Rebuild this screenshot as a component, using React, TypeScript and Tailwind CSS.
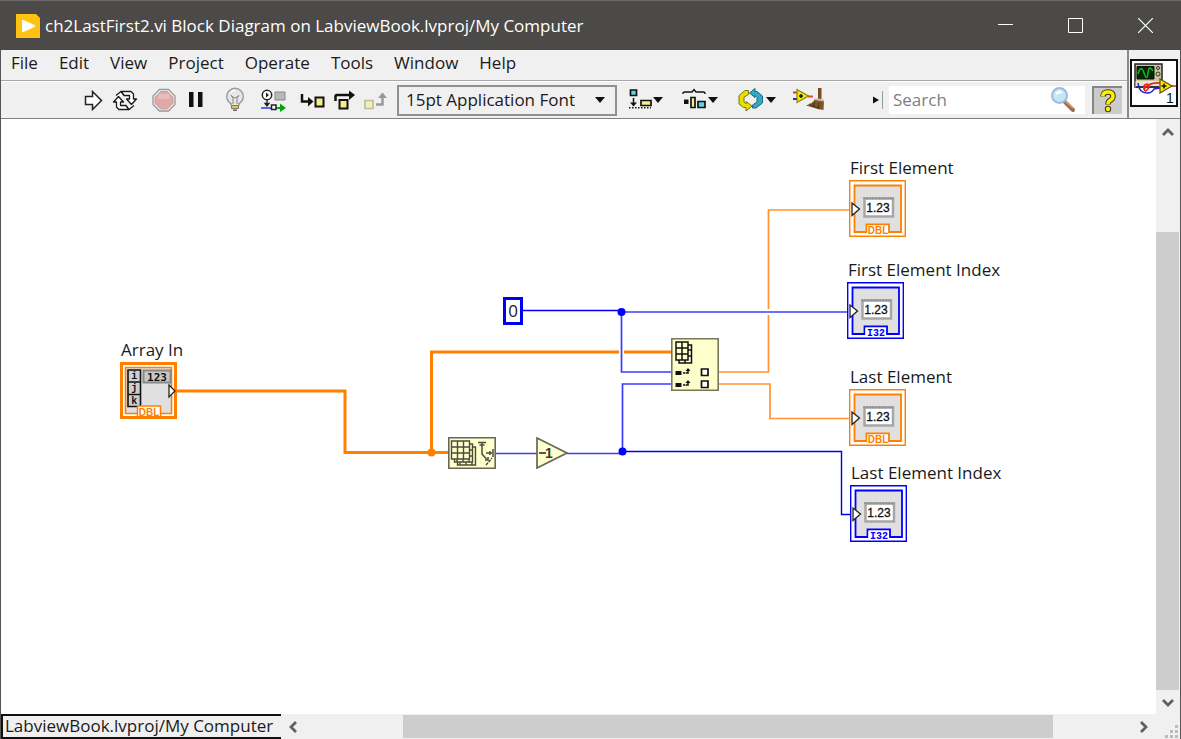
import React from "react";

const ORANGE = "#ff8000";
const THIN_ORANGE = "#ff9430";
const BLUE = "#0000f0";
const THIN_BLUE = "#3c3cff";

type IconProps = { w: number; children: React.ReactNode };

function Glyph({ w, children }: IconProps) {
  return (
    <svg width={w} height={28} viewBox={`0 0 ${w} 28`} aria-hidden="true">
      {children}
    </svg>
  );
}

function ToolButton({
  label,
  w,
  className = "",
  children,
}: IconProps & { label: string; className?: string }) {
  return (
    <button type="button" aria-label={label} className={`shrink-0 ${className}`}>
      <Glyph w={w}>{children}</Glyph>
    </button>
  );
}

function TitleBar() {
  return (
    <header className="flex h-[50px] shrink-0 items-center border-t border-[#6a6967] bg-[#4b4a48] pl-4 text-white">
      <svg width="24" height="24" viewBox="0 0 24 24" aria-hidden="true">
        <path d="M0 0H20L24 4V24H0Z" fill="#ffc20e" />
        <path d="M6 7Q6 5.500 7.500 6L18.500 11Q20 12 18.500 13L7.500 18Q6 18.500 6 17Z" fill="#fff" />
      </svg>
      <h1 className="ml-[5px] whitespace-nowrap text-[17px] leading-6">
        ch2LastFirst2.vi Block Diagram on LabviewBook.lvproj/My Computer
      </h1>
      <div className="ml-auto flex h-full">
        <button type="button" aria-label="Minimize" className="flex w-[70px] items-center justify-center">
          <svg width="15" height="15" viewBox="0 0 15 15"><path d="M0 6.500H15" stroke="#fff" /></svg>
        </button>
        <button type="button" aria-label="Maximize" className="flex w-[70px] items-center justify-center">
          <svg width="15" height="15" viewBox="0 0 15 15"><path d="M.5.5H14.500V14.500H.5Z" stroke="#fff" fill="none" /></svg>
        </button>
        <button type="button" aria-label="Close" className="flex w-[71px] items-center justify-center">
          <svg width="15" height="15" viewBox="0 0 15 15"><path d="M0 0L15 15M15 0L0 15" stroke="#fff" strokeWidth="1.200" /></svg>
        </button>
      </div>
    </header>
  );
}

const MENUS = ["File", "Edit", "View", "Project", "Operate", "Tools", "Window", "Help"];

function MenuBar() {
  return (
    <nav className="flex h-[31px] items-center gap-[21px] border-b border-[#a8a8a8] pb-1 pl-[10px] text-[17px] leading-6">
      {MENUS.map((m) => (
        <button key={m} type="button">{m}</button>
      ))}
    </nav>
  );
}

function Toolbar() {
  return (
    <div className="flex h-[37px] items-center border-t border-white pl-[83px] pr-[5px]">
      <ToolButton label="Run" w={20}>
        <path d="M1.500 10.500H8.500V5.500L17.500 14.500L8.500 23.500V18.500H1.500Z" fill="#fff" stroke="#222" strokeWidth="1.500" />
      </ToolButton>
      <ToolButton label="Run Continuously" w={26} className="ml-2">
        <g fill="#fff" stroke="#1a1a1a" strokeWidth="1.300" strokeLinejoin="round">
          <path d="M9 5.500H19L21.500 8V13H24.500L19.500 18.500L14.500 13H17.500V9.500H12Z" />
          <path d="M17 23.500H7L4.500 21V16H1.500L6.500 10.500L11.500 16H8.500V19.500H14Z" />
          <path d="M4 9.500L9 5.500L12 9.500" />
          <path d="M22 19.500L17 23.500L14 19.500" />
        </g>
      </ToolButton>
      <ToolButton label="Abort Execution" w={24} className="ml-[14px]">
        <path d="M7.500 3.500H16.500L23 10V18.500L16.500 25H7.500L1 18.500V10Z" fill="#f4f4f4" stroke="#999" strokeWidth="1.300" />
        <path d="M8.500 5.500H15.500L21 11V17.500L15.500 23H8.500L3 17.500V11Z" fill="#dfa9a9" stroke="#c9a0a0" />
        <path d="M6 8H18V13H6Z" fill="#e8bcbc" />
      </ToolButton>
      <ToolButton label="Pause" w={16} className="ml-3">
        <path d="M1 6H5.500V21H1ZM10 6H14.500V21H10Z" fill="#111" />
      </ToolButton>
      <ToolButton label="Highlight Execution" w={22} className="ml-5">
        <circle cx="11" cy="10.500" r="8.300" fill="#e6e6e6" stroke="#999" strokeWidth="1.400" />
        <path d="M7.500 17V20H14.500V17L16 15H6Z" fill="#e6e6e6" />
        <path d="M7 17V20M15 17V20M7 9L9 12V18M15 9L13 12V18M7 10L11 12L15 10" fill="none" stroke="#888" />
        <path d="M7.500 19.500H14.500V22.500H7.500Z" fill="#e8c84a" stroke="#777" />
        <path d="M9 23.500H13V25H9Z" fill="#666" />
        <path d="M6.500 7Q8 4.500 11 4.500" stroke="#fff" strokeWidth="1.500" fill="none" />
      </ToolButton>
      <ToolButton label="Retain Wire Values" w={28} className="ml-[14px]">
        <path d="M15 6H25V14H15Z" fill="#b8b8b8" stroke="#888" />
        <circle cx="7" cy="9" r="4.700" fill="#fff" stroke="#222" strokeWidth="1.500" />
        <path d="M6 6.500L9 9L6 11.500Z" fill="#222" />
        <path d="M7 14V18M5 17.500H9L7 20Z" stroke="#222" strokeWidth="1.300" fill="#222" />
        <path d="M1 22H18" stroke="#1515e0" strokeWidth="1.300" />
        <path d="M11.500 19H16V23.500H11.500Z" fill="#fff" stroke="#222" strokeWidth="1.500" />
        <path d="M18 21H20V17.500L26 22L20 26V23H18Z" fill="#00a800" />
      </ToolButton>
      <ToolButton label="Step Into" w={26} className="ml-3">
        <path d="M2 8V15.500H9" fill="none" stroke="#111" strokeWidth="2.500" />
        <path d="M8 11L13.500 15.500L8 20.500Z" fill="#111" />
        <path d="M15.500 11.500H23.500V20.500H15.500Z" fill="#f3f08a" stroke="#111" strokeWidth="2" />
      </ToolButton>
      <ToolButton label="Step Over" w={22} className="ml-2">
        <path d="M1.500 15V10.500Q1.500 9 3 9H16" fill="none" stroke="#111" strokeWidth="2.500" />
        <path d="M15 4.500L21 9L15 14Z" fill="#111" />
        <path d="M5.500 14H13.500V22.500H5.500Z" fill="#f3f08a" stroke="#111" strokeWidth="2" />
      </ToolButton>
      <ToolButton label="Step Out" w={24} className="ml-2">
        <path d="M1 14.500H9V22.500H1Z" fill="#f3f2b4" stroke="#bcbca0" strokeWidth="1.600" />
        <path d="M12 18.500H18.500V11" fill="none" stroke="#999" strokeWidth="2.500" />
        <path d="M14 12L18.500 6.500L23 12Z" fill="#999" />
      </ToolButton>

      <div className="relative ml-[9px] flex w-[220px] shrink-0 items-center">
        <select
          aria-label="Font"
          className="h-[31px] w-full appearance-none border-2 border-[#909090] bg-[#f0f0f0] pl-[7px] text-[17px] leading-6 outline-none"
        >
          <option>15pt Application Font</option>
        </select>
        <svg className="pointer-events-none absolute right-3" width="10" height="6" viewBox="0 0 10 6" aria-hidden="true">
          <path d="M0 0H10L5 6Z" fill="#111" />
        </svg>
      </div>

      <ToolButton label="Align Objects" w={36} className="ml-3">
        <path d="M1.500 4H7.500V9.500H1.500Z" fill="#5fd3ea" stroke="#111" strokeWidth="1.700" />
        <path d="M4.500 12V19" stroke="#111" strokeWidth="1.500" />
        <path d="M1 16.500H8L4.500 20.500Z" fill="#111" />
        <path d="M12 14.500H22V19.500H12Z" fill="#f5f08c" stroke="#111" strokeWidth="1.700" />
        <path d="M0 21.800H22" stroke="#111" strokeWidth="1.500" strokeDasharray="1.500 1.500" />
        <path d="M24 11H34L29 17Z" fill="#111" />
      </ToolButton>
      <ToolButton label="Distribute Objects" w={38} className="ml-4">
        <path d="M2 8V7Q2 6 4 6H11L13 3.500L15 6H22Q24 6 24 7V8" fill="none" stroke="#111" strokeWidth="1.400" />
        <path d="M3 13.500H7.500V18H3Z" fill="#111" />
        <path d="M10 11.500H14V21.500H10Z" fill="#f5f08c" stroke="#111" strokeWidth="1.700" />
        <path d="M17 15.500H24V21.500H17Z" fill="#5fd3ea" stroke="#111" strokeWidth="1.700" />
        <path d="M27 11H37L32 17Z" fill="#111" />
      </ToolButton>
      <ToolButton label="Reorder" w={40} className="ml-[18px]">
        <path d="M11.500 4.500H8L2 9.500V18L6.500 21.500H9V25L15 20L9 15.500V18L7 16V11L11.500 8.500Z" fill="#e8e000" stroke="#77770a" />
        <path d="M15.500 22V19L20 16V11.500L18 9.500V11.500L12.500 7L18 2.500V5.500H20L25.500 10V17L19 22Z" fill="#35a8c4" stroke="#17697d" />
        <path d="M29 11H39L34 17Z" fill="#111" />
      </ToolButton>
      <ToolButton label="Clean Up Diagram" w={32} className="ml-4">
        <path d="M0 6.500H4" stroke="#e03030" strokeWidth="2" />
        <path d="M0 13H4" stroke="#2020e0" strokeWidth="2" />
        <path d="M15 10.500H20" stroke="#f04040" strokeWidth="2" />
        <path d="M4 3.500L15.500 10L4 16.500Z" fill="#f4e800" stroke="#8a8510" strokeWidth="1.200" />
        <path d="M6 10H10M8 8V12" stroke="#111" strokeWidth="1.500" />
        <path d="M25 2H28.500V13H25Z" fill="#75501e" />
        <path d="M22 13L31 14.500L30.500 24L23 22.500L13 19.500Q20 17 22 13Z" fill="#7b5427" />
        <path d="M22 13L31 14.500" stroke="#c8c0b0" strokeWidth="2" />
        <path d="M16 18L27 23M22 16L20 21M26 17L25 23" stroke="#4c3113" />
      </ToolButton>

      <div className="ml-auto flex shrink-0 items-center">
        <svg width="11" height="20" viewBox="0 0 11 20" aria-hidden="true">
          <path d="M1 6.500L7 10L1 13.500Z" fill="#111" />
          <path d="M10.500 1V19" stroke="#999" />
        </svg>
        <div className="ml-[6px] flex h-7 w-[196px] items-center bg-white pl-1">
          <input
            type="text"
            aria-label="Search"
            placeholder="Search"
            className="min-w-0 flex-1 bg-transparent text-[17px] leading-6 outline-none placeholder:text-[#808080]"
          />
          <svg width="34" height="28" viewBox="0 0 34 28" aria-hidden="true">
            <path d="M14 16L22 24" stroke="#9a6d4e" strokeWidth="4" strokeLinecap="round" />
            <path d="M14.500 15.500L22 22" stroke="#d8a070" strokeWidth="1.500" />
            <circle cx="8.500" cy="9.500" r="7.500" fill="#c5e6f7" stroke="#9dbbe2" strokeWidth="2" />
            <path d="M4.500 9Q5 4.500 9 4.500Q11 5 12 7Q8 7 4.500 9Z" fill="#fff" />
          </svg>
        </div>
        <button
          type="button"
          aria-label="Context Help"
          className="ml-[7px] flex h-7 w-[30px] items-center justify-center border-l-2 border-t-2 border-[#858585] bg-[#cbcbcb]"
        >
          <svg width="20" height="24" viewBox="0 0 20 24" aria-hidden="true">
            <path d="M5 7.500Q5 3 10 3Q15 3 15 7Q15 10 12 11.500Q10 12.500 10 15.500" fill="none" stroke="#3a3a10" strokeWidth="5.500" />
            <circle cx="10" cy="20" r="3.200" fill="#3a3a10" />
            <path d="M4.800 7.300Q5 3 10 3Q15 3 15 7Q15 10 12 11.500Q10 12.500 10 15.200" fill="none" stroke="#fff000" strokeWidth="3.500" />
            <circle cx="10" cy="20" r="2.200" fill="#fff000" />
          </svg>
        </button>
      </div>
    </div>
  );
}

function ViIcon() {
  return (
    <button type="button" aria-label="VI icon" className="mt-[9px] block">
      <svg width="48" height="48" viewBox="0 0 48 48" aria-hidden="true">
        <path d="M1 1H47V47H1Z" fill="#fff" stroke="#111" strokeWidth="2" />
        <path d="M5 5H32V28H5Z" fill="#c9c6a0" stroke="#222" strokeWidth="1.500" />
        <path d="M7 7.500H24V20H7Z" fill="#052505" stroke="#111" />
        <path d="M8 15Q11 5 14 14T18 14T23 12" fill="none" stroke="#10c020" strokeWidth="1.500" />
        <circle cx="28" cy="9" r="1.500" fill="none" stroke="#333" />
        <circle cx="28" cy="15" r="2" fill="none" stroke="#333" />
        <path d="M5.500 22H31V28H5.500Z" fill="#e6e4d8" />
        <path d="M6 28H29" fill="none" stroke="#333" strokeWidth="2" />
        <path d="M8 24Q9 34 17 34Q22 34 24 30L30 29" fill="none" stroke="#2020d0" strokeWidth="1.500" />
        <path d="M14 30Q13 26 17 25Q21 27 17 31Q15 33 14 30Q20 23 30 24M40 27H46" fill="none" stroke="#e82020" strokeWidth="1.700" />
        <path d="M30 20L42 27L30 34Z" fill="#ffe800" stroke="#554f00" strokeWidth="1.200" />
        <path d="M31.500 27H36.500M34 24.500V29.500" stroke="#111" strokeWidth="1.500" />
        <text x="36" y="44" fontFamily="Liberation Sans, sans-serif" fontSize="14" fill="#111">1</text>
      </svg>
    </button>
  );
}

function Wires() {
  return (
    <svg className="absolute left-0 top-0" width="1155" height="594" viewBox="1 119 1155 594" aria-hidden="true">
      <g fill="none" stroke={ORANGE} strokeWidth="3">
        <path d="M176 391H345V452.500H448" />
        <path d="M431.500 452V352H672" />
      </g>
      <circle cx="431.500" cy="452.500" r="4" fill={ORANGE} />
      <path d="M621.500 348V356" stroke="#fff" strokeWidth="5" />
      <g fill="none" stroke={THIN_ORANGE} strokeWidth="1.700">
        <path d="M719 372H768.500V210H849" />
        <path d="M719 384H770V418.500H849" />
      </g>
      <path d="M768.500 309V315" stroke="#fff" strokeWidth="4" />
      <g fill="none" stroke={THIN_BLUE} strokeWidth="1.700">
        <path d="M621 312H848" />
        <path d="M621.500 312V372H672" />
        <path d="M622.500 452V384H672" />
        <path d="M496 453.500H537M567 453.500H622" />
      </g>
      <g fill="none" stroke={BLUE} strokeWidth="1.400">
        <path d="M523 310.500H621" />
        <path d="M622 451.500H841.500V514.500H851" />
      </g>
      <circle cx="621.500" cy="312" r="4" fill="#0000ff" />
      <circle cx="622.500" cy="451.500" r="4" fill="#0000ff" />
    </svg>
  );
}

function Indicator({ kind }: { kind: "DBL" | "I32" }) {
  const color = kind === "DBL" ? ORANGE : "#0000ff";
  return (
    <svg width="57" height="57" viewBox="0 0 57 57" aria-hidden="true">
      <path d="M.7.7H56.300V56.300H.7Z" fill="#fff" stroke={color} strokeWidth="1.400" />
      <path d="M5.500 5.500H52V52H40V44.500H17.500V52H5.500Z" fill="#e0e0e0" stroke={color} strokeWidth="1.800" />
      <path d="M18.500 45.500H39V54H18.500Z" fill="#fff" />
      <path d="M15.500 18.500H44V36.500H15.500Z" fill="#fff" stroke="#a6a6a6" strokeWidth="2.500" />
      <path d="M14.300 18.300H45" stroke="#8e8e8e" strokeWidth="2" strokeDasharray="2 1" />
      <text x="29" y="32" textAnchor="middle" fontFamily="Liberation Sans, sans-serif" fontSize="12" fill="#111" stroke="#111" strokeWidth=".3">1.23</text>
      {kind === "DBL" ? (
        <text x="29" y="54" textAnchor="middle" fontFamily="Liberation Sans, sans-serif" fontWeight="bold" fontSize="10" fill={color}>DBL</text>
      ) : (
        <text x="29" y="53.500" textAnchor="middle" fontFamily="Liberation Mono, monospace" fontWeight="bold" fontSize="10" fill={color}>I32</text>
      )}
      <path d="M3 23L10.500 29L3 35.500Z" fill="#fff" stroke="#222" strokeWidth="1.300" />
    </svg>
  );
}

function ArrayControl() {
  return (
    <svg width="57" height="57" viewBox="0 0 57 57" aria-hidden="true">
      <path d="M1.500 1.500H55.500V55.500H1.500Z" fill="#fff" stroke={ORANGE} strokeWidth="3" />
      <path d="M5.500 5.500H51.500V51.500H5.500Z" fill="#e0e0e0" stroke={ORANGE} strokeWidth="1.600" />
      <path d="M8 8H20.500V44.500H8ZM8 20H20.500M8 32.500H20.500" fill="#cfcfcf" stroke="#111" strokeWidth="1.600" />
      <g fontFamily="Liberation Mono, monospace" fontWeight="bold" fontSize="10" fill="#111" textAnchor="middle">
        <text x="14.300" y="17">i</text>
        <text x="14.300" y="29">j</text>
        <text x="14.300" y="42">k</text>
      </g>
      <path d="M23.500 8.500H50.500V20.500H23.500Z" fill="#c8c8c8" stroke="#888" strokeWidth="2" />
      <text x="37" y="18.500" textAnchor="middle" fontFamily="DejaVu Sans Mono, monospace" fontWeight="bold" fontSize="11" fill="#111">123</text>
      <path d="M17.500 44H40.500V54H17.500Z" fill="#fff" stroke={ORANGE} strokeWidth="1.500" />
      <path d="M18 54H40" stroke="#fff" strokeWidth="2" />
      <text x="29" y="53.500" textAnchor="middle" fontFamily="Liberation Sans, sans-serif" fontWeight="bold" fontSize="10" fill={ORANGE}>DBL</text>
      <path d="M1.500 55.500H55.500" stroke={ORANGE} strokeWidth="3" />
      <path d="M49 23L55 29L49 35Z" fill="#fff" stroke="#222" strokeWidth="1.300" />
    </svg>
  );
}

function ArraySize() {
  return (
    <svg width="48" height="32" viewBox="0 0 48 32" aria-hidden="true">
      <path d="M.8.8H47.200V31.200H.8Z" fill="#ffffcc" stroke="#66665a" strokeWidth="1.600" />
      <g fill="#ffffcc" stroke="#4c4c3c" strokeWidth="1.400">
        <path d="M9.500 10H27.500V28H9.500ZM12 28V25M18 28V22M24 28V22" />
        <path d="M6.500 7H24.500V25H6.500ZM9 25V22M15 25V22M21 25V22M24.500 13H21M24.500 19H21" />
        <path d="M3.500 4H21.500V22H3.500ZM9.500 4V22M15.500 4V22M3.500 10H21.500M3.500 16H21.500" />
      </g>
      <g fill="none" stroke="#4c4c3c" strokeWidth="1.500">
        <path d="M30 5.500H38M34 5.500V17L38.500 22M31.500 8H36.500M38 16H44M45 12V20M42 14V18" />
        <path d="M37 23H40V20" />
        <path d="M38 28L44 21" strokeDasharray="3 1" />
      </g>
    </svg>
  );
}

function Decrement() {
  return (
    <svg width="33" height="32" viewBox="0 0 33 32" aria-hidden="true">
      <path d="M1 1L31 16L1 31Z" fill="#ffffcc" stroke="#66665a" strokeWidth="1.700" />
      <path d="M3 16H10" stroke="#3c3c30" strokeWidth="1.700" />
      <text x="9" y="21" fontFamily="Liberation Sans, sans-serif" fontWeight="bold" fontSize="14" fill="#3c3c30">1</text>
    </svg>
  );
}

function IndexArray() {
  return (
    <svg width="48" height="53" viewBox="0 0 48 53" aria-hidden="true">
      <path d="M.8.8H47.200V52.200H.8Z" fill="#ffffcc" stroke="#77775c" strokeWidth="1.600" />
      <g fill="#ffffcc" stroke="#111" strokeWidth="1.500">
        <path d="M8 7H20.500V25H8ZM14 25V22M20.500 12H17M20.500 18H17" />
        <path d="M5 4H17V22H5ZM11 4V22M5 10H17M5 16H17" />
      </g>
      {[35, 47].map((y) => (
        <g key={y}>
          <path d={`M4.500 ${y - 2}H10.500V${y + 2}H4.500Z`} fill="#111" />
          <path d={`M12 ${y}H14M14.500 ${y}H17V${y - 3}`} fill="none" stroke="#111" strokeWidth="1.500" />
          <path d={`M14.500 ${y - 2}L17 ${y - 5}L19.500 ${y - 2}Z`} fill="#111" />
          <path d={`M30.500 ${y - 4}H37V${y + 2.5}H30.500Z`} fill="#fff" stroke="#111" strokeWidth="1.700" />
        </g>
      ))}
    </svg>
  );
}

function Label({ children }: { children: string }) {
  return <span className="block whitespace-nowrap pl-px text-[17px] leading-6">{children}</span>;
}

function Diagram() {
  return (
    <main className="relative min-w-0 flex-1 overflow-hidden bg-white" aria-label="Block diagram">
      <Wires />
      <div className="absolute left-[119px] top-[219px]">
        <Label>Array In</Label>
        <ArrayControl />
      </div>
      <div className="absolute left-[502px] top-[178px] flex h-7 w-5 items-center justify-center border-[3px] border-[#0000f0] bg-white text-[17px] leading-5">
        0
      </div>
      <div className="absolute left-[447px] top-[318px]"><ArraySize /></div>
      <div className="absolute left-[535px] top-[318px]"><Decrement /></div>
      <div className="absolute left-[670px] top-[219px]"><IndexArray /></div>
      <div className="absolute left-[848px] top-[37px]">
        <Label>First Element</Label>
        <Indicator kind="DBL" />
      </div>
      <div className="absolute left-[846px] top-[139px]">
        <Label>First Element Index</Label>
        <Indicator kind="I32" />
      </div>
      <div className="absolute left-[848px] top-[246px]">
        <Label>Last Element</Label>
        <Indicator kind="DBL" />
      </div>
      <div className="absolute left-[849px] top-[342px]">
        <Label>Last Element Index</Label>
        <Indicator kind="I32" />
      </div>
    </main>
  );
}

function Arrow({ d, label, className }: { d: string; label: string; className: string }) {
  return (
    <button type="button" aria-label={label} className={`flex shrink-0 items-center justify-center ${className}`}>
      <svg width="12" height="12" viewBox="0 0 12 12"><path d={d} fill="none" stroke="#606060" strokeWidth="2.800" /></svg>
    </button>
  );
}

export default function App() {
  return (
    <div
      className="flex h-screen flex-col overflow-hidden bg-[#f0f0f0] text-[#1a1a1a]"
      style={{ fontFamily: '"Open Sans", "Noto Sans", sans-serif' }}
    >
      <TitleBar />
      <div className="flex min-h-0 flex-1 flex-col border-l border-r border-[#555]">
        <div className="flex shrink-0 border-b border-[#808080]">
          <div className="min-w-0 flex-1">
            <MenuBar />
            <Toolbar />
          </div>
          <div className="w-[53px] shrink-0 border-l-2 border-[#8a8a8a] pl-px">
            <ViIcon />
          </div>
        </div>

        <div className="flex min-h-0 flex-1">
          <Diagram />
          <div className="flex w-6 shrink-0 flex-col">
            <Arrow label="Scroll up" className="h-[26px]" d="M1 9L6 4L11 9" />
            <div className="flex flex-1 flex-col">
              <div className="grow-[87]" />
              <div className="mr-px grow-[457] bg-[#cdcdcd]" />
            </div>
            <Arrow label="Scroll down" className="h-6" d="M1 4L6 9L11 4" />
          </div>
        </div>

        <footer className="flex h-[25px] shrink-0">
          <div className="flex w-[280px] shrink-0 items-center whitespace-nowrap border-y-2 border-l-2 border-[#111] pb-[2px] pl-[2px] text-[17px] leading-5">
            LabviewBook.lvproj/My Computer
          </div>
          <Arrow label="Scroll left" className="w-6" d="M9 1L4 6L9 11" />
          <div className="flex min-w-0 flex-1 pb-px pt-px">
            <div className="grow-[98]" />
            <div className="grow-[650] bg-[#cdcdcd]" />
            <div className="grow-[79]" />
          </div>
          <Arrow label="Scroll right" className="w-6" d="M3 1L8 6L3 11" />
          <div className="flex w-6 shrink-0 items-end justify-end pb-px pr-[2px]">
            <svg width="13" height="13" viewBox="0 0 13 13" aria-hidden="true">
              <path d="M10 0H13V3H10ZM5 5H8V8H5ZM10 5H13V8H10ZM0 10H3V13H0ZM5 10H8V13H5ZM10 10H13V13H10Z" fill="#bbb" />
            </svg>
          </div>
        </footer>
      </div>
    </div>
  );
}
